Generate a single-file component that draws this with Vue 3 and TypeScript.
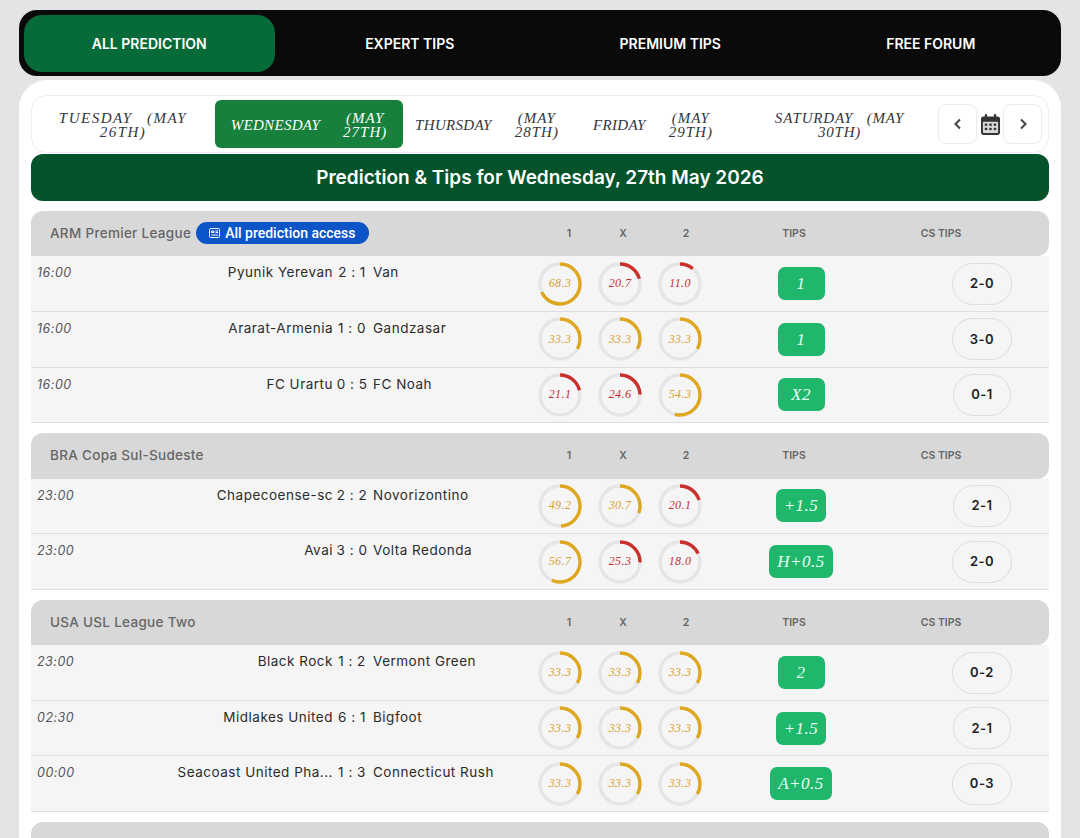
<script setup lang="ts">
interface Match {
  time: string
  home: string
  score: string
  away: string
  odds: number[]
  tip: string
  cs: string
}

interface League {
  name: string
  access?: boolean
  matches: Match[]
}

const navItems = ['ALL PREDICTION', 'EXPERT TIPS', 'PREMIUM TIPS', 'FREE FORUM']

const days = [
  { key: 'tue', text: 'TUESDAY (MAY\n26TH)', split: false },
  { key: 'wed', text: 'WEDNESDAY', date: '(MAY\n27TH)', split: true, active: true },
  { key: 'thu', text: 'THURSDAY', date: '(MAY\n28TH)', split: true },
  { key: 'fri', text: 'FRIDAY', date: '(MAY\n29TH)', split: true },
  { key: 'sat', text: 'SATURDAY (MAY\n30TH)', split: false },
]

const even = [33.3, 33.3, 33.3]

const leagues: League[] = [
  {
    name: 'ARM Premier League',
    access: true,
    matches: [
      { time: '16:00', home: 'Pyunik Yerevan', score: '2 : 1', away: 'Van', odds: [68.3, 20.7, 11.0], tip: '1', cs: '2-0' },
      { time: '16:00', home: 'Ararat-Armenia', score: '1 : 0', away: 'Gandzasar', odds: even, tip: '1', cs: '3-0' },
      { time: '16:00', home: 'FC Urartu', score: '0 : 5', away: 'FC Noah', odds: [21.1, 24.6, 54.3], tip: 'X2', cs: '0-1' },
    ],
  },
  {
    name: 'BRA Copa Sul-Sudeste',
    matches: [
      { time: '23:00', home: 'Chapecoense-sc', score: '2 : 2', away: 'Novorizontino', odds: [49.2, 30.7, 20.1], tip: '+1.5', cs: '2-1' },
      { time: '23:00', home: 'Avai', score: '3 : 0', away: 'Volta Redonda', odds: [56.7, 25.3, 18.0], tip: 'H+0.5', cs: '2-0' },
    ],
  },
  {
    name: 'USA USL League Two',
    matches: [
      { time: '23:00', home: 'Black Rock', score: '1 : 2', away: 'Vermont Green', odds: even, tip: '2', cs: '0-2' },
      { time: '02:30', home: 'Midlakes United', score: '6 : 1', away: 'Bigfoot', odds: even, tip: '+1.5', cs: '2-1' },
      { time: '00:00', home: 'Seacoast United Pha...', score: '1 : 3', away: 'Connecticut Rush', odds: even, tip: 'A+0.5', cs: '0-3' },
    ],
  },
  // only the top edge of the next league is on screen
  { name: '', matches: [] },
]

const columns = ['1', 'X', '2', 'TIPS', 'CS TIPS']

const isLow = (value: number) => value < 30
</script>

<template>
  <div class="page">
    <nav class="top-nav">
      <a v-for="(item, i) in navItems" :key="item" class="nav-item" :class="{ active: i === 0 }">{{ item }}</a>
    </nav>

    <main class="card">
      <div class="date-strip">
        <div
          v-for="day in days"
          :key="day.key"
          class="day"
          :class="[day.key, { active: day.active, split: day.split }]"
        >
          <span class="day-text">{{ day.text }}</span>
          <span v-if="day.date" class="day-date">{{ day.date }}</span>
        </div>

        <div class="controls">
          <button class="arrow" aria-label="Previous">
            <svg width="14" height="14" viewBox="0 0 14 14"><path d="M9 2.5 4.5 7 9 11.5" /></svg>
          </button>
          <span class="calendar">
            <svg width="19" height="21" viewBox="0 0 20 22">
              <rect x="4" y="0" width="2.4" height="5" rx="1" fill="#333" />
              <rect x="13.6" y="0" width="2.4" height="5" rx="1" fill="#333" />
              <path d="M2.5 2.5h15A2.5 2.5 0 0 1 20 5v14.5a2.5 2.5 0 0 1-2.5 2.5h-15A2.5 2.5 0 0 1 0 19.5V5a2.5 2.5 0 0 1 2.5-2.5Z" fill="#333" />
              <rect x="2" y="8" width="16" height="12" rx="1" fill="#d9d9d9" />
              <g fill="#333">
                <rect x="4" y="10" width="2.6" height="2.4" />
                <rect x="8.7" y="10" width="2.6" height="2.4" />
                <rect x="13.4" y="10" width="2.6" height="2.4" />
                <rect x="4" y="14.5" width="2.6" height="2.4" />
                <rect x="8.7" y="14.5" width="2.6" height="2.4" />
                <rect x="13.4" y="14.5" width="2.6" height="2.4" />
              </g>
            </svg>
          </span>
          <button class="arrow" aria-label="Next">
            <svg width="14" height="14" viewBox="0 0 14 14"><path d="M5 2.5 9.5 7 5 11.5" /></svg>
          </button>
        </div>
      </div>

      <h1 class="title">Prediction &amp; Tips for Wednesday, 27th May 2026</h1>

      <section v-for="(league, idx) in leagues" :key="idx" class="league">
        <header class="league-head">
          <template v-if="league.name">
            <div class="league-name">
              <span>{{ league.name }}</span>
              <span v-if="league.access" class="access">
                <svg width="13" height="12" viewBox="0 0 13 12" fill="none" stroke="#fff" stroke-width="1">
                  <rect x="1.5" y="1.5" width="10" height="9" rx="1.2" />
                  <path d="M3.5 4h2.5v1.5h-2.5zM7.5 4h2.5M7.5 5.500h2.500M3.500 8h6.500" />
                </svg>
                All prediction access
              </span>
            </div>
            <span v-for="col in columns" :key="col" class="col">{{ col }}</span>
          </template>
        </header>

        <div v-for="match in league.matches" :key="match.home" class="row">
          <span class="time">{{ match.time }}</span>
          <span class="home">{{ match.home }}</span>
          <span class="score">{{ match.score }}</span>
          <span class="away">{{ match.away }}</span>
          <div class="odds">
            <div v-for="(odd, n) in match.odds" :key="n" class="ring" :class="{ low: isLow(odd) }">
              <svg width="44" height="44" viewBox="0 0 44 44">
                <circle class="track" cx="22" cy="22" r="20" />
                <circle
                  class="bar"
                  cx="22"
                  cy="22"
                  r="20"
                  pathLength="100"
                  :stroke-dasharray="`${odd} 100`"
                  transform="rotate(-90 22 22)"
                />
              </svg>
              <span class="ring-value">{{ odd.toFixed(1) }}</span>
            </div>
          </div>
          <div class="tip-cell"><span class="tip">{{ match.tip }}</span></div>
          <div class="cs-cell"><span class="cs">{{ match.cs }}</span></div>
        </div>
      </section>
    </main>
  </div>
</template>

<style>
html,
body {
  margin: 0;
  background: #e4e4e4;
  overflow: hidden;
}
</style>

<style scoped>
.page {
  height: 838px;
  overflow: hidden;
  box-sizing: border-box;
  padding: 10px 19px 0;
  background: #e4e4e4;
  font-family: Inter, "Liberation Sans", sans-serif;
}

.top-nav {
  display: grid;
  grid-template-columns: repeat(4, 1fr);
  height: 66px;
  background: #0a0a0a;
  border-radius: 18px;
}

.nav-item {
  display: flex;
  align-items: center;
  justify-content: center;
  margin: 5px;
  margin-bottom: 4px;
  border-radius: 18px;
  color: #fff;
  font-size: 14px;
  font-weight: 600;
}

.nav-item.active {
  background: #076b39;
}

.card {
  margin-top: 4px;
  padding: 15px 12px 0;
  background: #fff;
  border-radius: 28px 28px 0 0;
  min-height: 800px;
}

.date-strip {
  display: flex;
  align-items: center;
  height: 58px;
  box-sizing: border-box;
  padding-left: 5px;
  border: 1px solid #eeeeee;
  border-radius: 16px;
}

.day {
  display: flex;
  align-items: center;
  justify-content: center;
  height: 48px;
  margin-right: 6px;
  padding-top: 1px;
  box-sizing: border-box;
  border-radius: 6px;
  color: #33363c;
  font-family: "Liberation Serif", serif;
  font-style: italic;
  font-size: 15px;
  line-height: 14px;
  letter-spacing: 0.8px;
  word-spacing: 9px;
  text-align: center;
  white-space: pre-line;
}

.day.split {
  gap: 23px;
  letter-spacing: 0.3px;
}

.day.active {
  background: #18803d;
  color: #fff;
}

.tue { width: 172px; letter-spacing: 1.5px; }
.wed { width: 188px; }
.thu { width: 156px; }
.fri { width: 164px; }
.sat { width: 197px; margin-right: 0; }

.day-date {
  letter-spacing: 1px;
  white-space: pre-line;
}

.controls {
  display: flex;
  align-items: center;
}

.arrow {
  display: flex;
  align-items: center;
  justify-content: center;
  width: 39px;
  height: 40px;
  padding: 0;
  background: #fff;
  border: 1px solid #ececec;
  border-radius: 8px;
}

.arrow path {
  fill: none;
  stroke: #444;
  stroke-width: 2;
}

.calendar {
  display: flex;
  align-items: center;
  justify-content: center;
  width: 26px;
}

.title {
  margin: 1px 0 10px;
  height: 47px;
  background: #04532b;
  border-radius: 12px;
  color: #fff;
  font-size: 19px;
  font-weight: 600;
  line-height: 47px;
  text-align: center;
}

.league {
  margin-bottom: 10px;
}

.league-head {
  display: grid;
  grid-template-columns: 489px 60px 48px 78px 138px 156px 1fr;
  align-items: center;
  height: 45.3px;
  box-sizing: border-box;
  padding: 0 0 1px 19px;
  background: #d8d8d8;
  border-radius: 12px 12px 12px 0;
  color: #666;
}

.league-name {
  display: flex;
  align-items: center;
  gap: 5px;
  height: 22px;
  font-size: 13.5px;
  font-weight: 500;
  letter-spacing: 0.3px;
}

.access {
  display: inline-flex;
  align-items: center;
  gap: 4px;
  height: 22px;
  padding: 0 13px 0 12px;
  background: #0b55c9;
  border-radius: 11px;
  color: #fff;
  font-family: Roboto, "Liberation Sans", sans-serif;
  font-size: 14px;
  font-weight: 500;
  letter-spacing: 0;
}

.col {
  font-size: 10.5px;
  font-weight: 600;
  text-align: center;
}

.row {
  display: grid;
  grid-template-columns: 60px 236px 38px 159px 180px 182px 1fr;
  height: 55.67px;
  box-sizing: border-box;
  padding-left: 6px;
  background: #f5f5f5;
  border-bottom: 1px solid #dddddd;
  color: #2b2b2b;
  font-size: 13.5px;
  line-height: 17px;
  letter-spacing: 0.5px;
}

.time,
.home,
.score,
.away {
  padding-top: 8px;
}

.time {
  color: #555;
  font-size: 12.5px;
  font-style: italic;
}

.home {
  overflow: hidden;
  text-align: right;
  white-space: nowrap;
}

.score {
  text-align: center;
  white-space: nowrap;
}

.away {
  padding-left: 2px;
  white-space: nowrap;
}

.odds {
  display: grid;
  grid-template-columns: repeat(3, 60px);
  align-items: center;
  justify-items: center;
}

.ring {
  position: relative;
  width: 44px;
  height: 44px;
  color: #d9a032;
}

.ring.low {
  color: #c22f35;
}

.ring svg {
  display: block;
}

.track,
.bar {
  fill: none;
  stroke-width: 3.4;
}

.track {
  stroke: #e4e5e8;
}

.bar {
  stroke: #dfa71f;
}

.low .bar {
  stroke: #c9302c;
}

.ring-value {
  position: absolute;
  inset: 0;
  display: flex;
  align-items: center;
  justify-content: center;
  font-family: "Liberation Serif", serif;
  font-style: italic;
  font-size: 12px;
  letter-spacing: 0.4px;
}

.tip-cell,
.cs-cell {
  display: flex;
  align-items: center;
  justify-content: center;
}

.cs-cell {
  padding-left: 23px;
}

.tip {
  min-width: 47px;
  height: 33px;
  box-sizing: border-box;
  padding: 0 8px;
  background: #1fb76c;
  border-radius: 7px;
  color: #e8fff2;
  font-family: "Liberation Serif", serif;
  font-size: 17px;
  font-style: italic;
  line-height: 33px;
  letter-spacing: 0.5px;
  text-align: center;
}

.cs {
  display: flex;
  align-items: center;
  justify-content: center;
  height: 42px;
  padding: 0 17px;
  box-sizing: border-box;
  border: 1px solid #dddddd;
  border-radius: 21px;
  color: #1d1d1d;
  font-size: 13px;
  font-weight: 600;
}
</style>
